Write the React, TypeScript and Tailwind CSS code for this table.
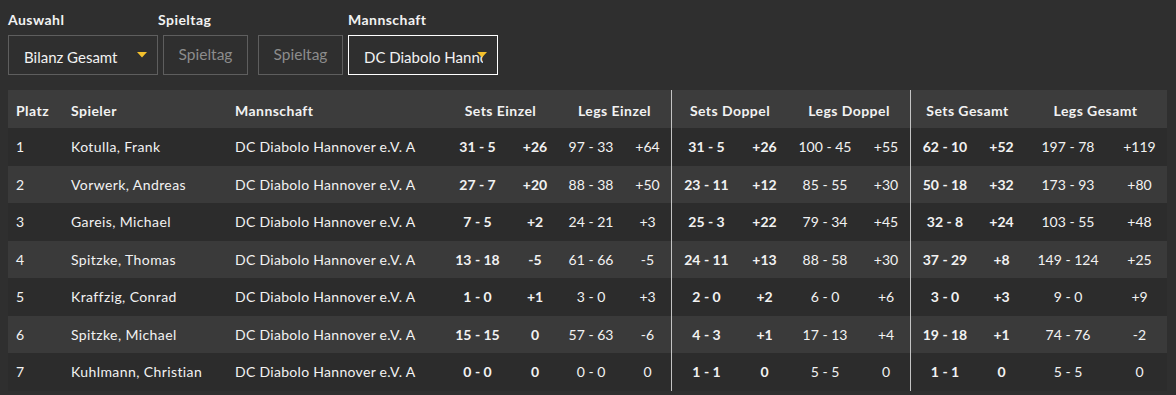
import React from "react";

type Row = [string, string, string, string, string, string, string, string, string, string, string, string, string, string];

const rows: Row[] = [
  ["1", "Kotulla, Frank", "31 - 5", "+26", "97 - 33", "+64", "31 - 5", "+26", "100 - 45", "+55", "62 - 10", "+52", "197 - 78", "+119"],
  ["2", "Vorwerk, Andreas", "27 - 7", "+20", "88 - 38", "+50", "23 - 11", "+12", "85 - 55", "+30", "50 - 18", "+32", "173 - 93", "+80"],
  ["3", "Gareis, Michael", "7 - 5", "+2", "24 - 21", "+3", "25 - 3", "+22", "79 - 34", "+45", "32 - 8", "+24", "103 - 55", "+48"],
  ["4", "Spitzke, Thomas", "13 - 18", "-5", "61 - 66", "-5", "24 - 11", "+13", "88 - 58", "+30", "37 - 29", "+8", "149 - 124", "+25"],
  ["5", "Kraffzig, Conrad", "1 - 0", "+1", "3 - 0", "+3", "2 - 0", "+2", "6 - 0", "+6", "3 - 0", "+3", "9 - 0", "+9"],
  ["6", "Spitzke, Michael", "15 - 15", "0", "57 - 63", "-6", "4 - 3", "+1", "17 - 13", "+4", "19 - 18", "+1", "74 - 76", "-2"],
  ["7", "Kuhlmann, Christian", "0 - 0", "0", "0 - 0", "0", "1 - 1", "0", "5 - 5", "0", "1 - 1", "0", "5 - 5", "0"],
];

const gridCols =
  "grid grid-cols-[55px_164px_216px_69px_46px_66px_47px_70px_47px_74px_48px_69px_45px_88px_55px]";

function Arrow() {
  return (
    <svg
      className="absolute right-[10px] top-[16px]"
      width="10"
      height="6"
      viewBox="0 0 10 6"
    >
      <polygon points="0,0 10,0 5,5.5" fill="#f3c02c" />
    </svg>
  );
}

export default function App() {
  return (
    <div className="min-h-[395px] w-[1176px] bg-[#2f2f2f] font-[Lato,sans-serif] text-[#f2f2f2] pt-[10px] px-[8px]">
      {/* Filters */}
      <div className="flex">
        <div className="w-[150px]">
          <div className="text-[14px] font-bold leading-[20px] h-[20px] tracking-[0.45px]">Auswahl</div>
          <div className="relative mt-[5px] h-[40px] w-[150px] border border-[#5e5e5e] pl-[15px] pt-[5px] flex items-center text-[15px]">
            <span>Bilanz Gesamt</span>
            <Arrow />
          </div>
        </div>
        <div className="w-[190px]">
          <div className="text-[14px] font-bold leading-[20px] h-[20px] tracking-[0.45px]">Spieltag</div>
          <div className="mt-[5px] flex">
            <div className="ml-[5px] h-[40px] w-[85px] border border-[#5e5e5e] flex items-center justify-center pb-[1px] text-[15.5px] text-[#8c8c8c]">
              Spieltag
            </div>
            <div className="ml-[10px] h-[40px] w-[85px] border border-[#5e5e5e] flex items-center justify-center pb-[1px] text-[15.5px] text-[#8c8c8c]">
              Spieltag
            </div>
          </div>
        </div>
        <div className="w-[150px]">
          <div className="text-[14px] font-bold leading-[20px] h-[20px] tracking-[0.45px]">Mannschaft</div>
          <div className="relative mt-[5px] h-[40px] w-[150px] border border-white pl-[15px] pt-[5px] flex items-center text-[15px]">
            <span className="block w-[119px] overflow-hidden whitespace-nowrap">DC Diabolo Hannover e.V. A</span>
            <Arrow />
          </div>
        </div>
      </div>

      {/* Table */}
      <div className="mt-[15px] w-[1159px] text-[14px]">
        <div className={`${gridCols} h-[38px] bg-[#3c3c3c] font-bold tracking-[0.45px]`}>
          <div className="flex items-end pb-[7px] pl-[8px] leading-[20px]">Platz</div>
          <div className="flex items-end pb-[7px] pl-[8px] leading-[20px]">Spieler</div>
          <div className="flex items-end pb-[7px] pl-[8px] leading-[20px]">Mannschaft</div>
          <div className="col-span-2 flex items-end justify-center pb-[7px] leading-[20px]">Sets Einzel</div>
          <div className="col-span-2 flex items-end justify-center pb-[7px] leading-[20px]">Legs Einzel</div>
          <div className="col-span-2 flex items-end justify-center pb-[7px] leading-[20px] border-l border-[#c4c4c4]">Sets Doppel</div>
          <div className="col-span-2 flex items-end justify-center pb-[7px] leading-[20px]">Legs Doppel</div>
          <div className="col-span-2 flex items-end justify-center pb-[7px] leading-[20px] border-l border-[#c4c4c4]">Sets Gesamt</div>
          <div className="col-span-2 flex items-end justify-center pb-[7px] leading-[20px]">Legs Gesamt</div>
        </div>
        {rows.map((r, i) => (
          <div
            key={r[0]}
            className={`${gridCols} h-[37.5px] ${i % 2 === 0 ? "bg-[#2c2c2c]" : "bg-[#3a3a3a]"}`}
          >
            <div className="flex items-center pl-[8px]">{r[0]}</div>
            <div className="flex items-center pl-[8px] whitespace-nowrap tracking-[0.4px]">{r[1]}</div>
            <div className="flex items-center pl-[8px] whitespace-nowrap tracking-[0.3px]">DC Diabolo Hannover e.V. A</div>
            <div className="flex items-center justify-center font-bold whitespace-nowrap">{r[2]}</div>
            <div className="flex items-center justify-center font-bold">{r[3]}</div>
            <div className="flex items-center justify-center whitespace-nowrap">{r[4]}</div>
            <div className="flex items-center justify-center">{r[5]}</div>
            <div className="flex items-center justify-center font-bold whitespace-nowrap border-l border-[#c4c4c4]">{r[6]}</div>
            <div className="flex items-center justify-center font-bold">{r[7]}</div>
            <div className="flex items-center justify-center whitespace-nowrap">{r[8]}</div>
            <div className="flex items-center justify-center">{r[9]}</div>
            <div className="flex items-center justify-center font-bold whitespace-nowrap border-l border-[#c4c4c4]">{r[10]}</div>
            <div className="flex items-center justify-center font-bold">{r[11]}</div>
            <div className="flex items-center justify-center whitespace-nowrap">{r[12]}</div>
            <div className="flex items-center justify-center">{r[13]}</div>
          </div>
        ))}
      </div>
    </div>
  );
}
